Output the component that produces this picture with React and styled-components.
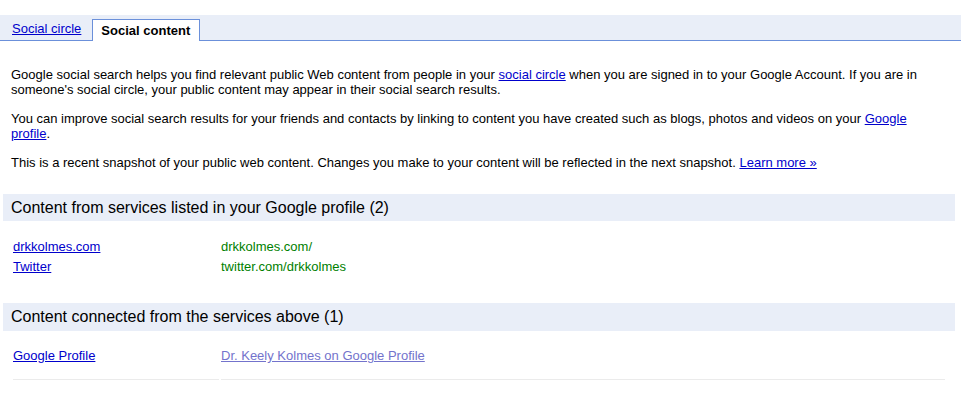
import React from "react";
import styled, { createGlobalStyle } from "styled-components";

const GlobalStyle = createGlobalStyle`
  body {
    margin: 0;
    background: #fff;
    font-family: "Liberation Sans", Arial, sans-serif;
    color: #000;
  }
`;

const Page = styled.div`
  padding-top: 15px;
  width: 965px;
`;

const TabBar = styled.div`
  display: flex;
  align-items: flex-end;
  width: 961px;
  height: 26px;
  padding-left: 4px;
  padding-right: 2px;
  box-sizing: border-box;
  background: #e9eef8;
  border-bottom: 1px solid #6b90da;
`;

const Tab = styled.div`
  font-size: 13px;
  line-height: 15px;
  padding: 0 8px;
  margin-right: 3px;
  box-sizing: border-box;
  ${(p) =>
    p.$active
      ? `
    height: 22px;
    padding-top: 3px;
    padding-right: 9px;
    background: #fff;
    font-weight: bold;
    border: 1px solid #6b90da;
    border-bottom: none;
    margin-bottom: -1px;
  `
      : `
    padding-bottom: 4px;
  `}
`;

const Link = styled.a`
  color: ${(p) => (p.$visited ? "#7373cc" : "#0000cc")};
  text-decoration: underline;
  cursor: pointer;
`;

const Intro = styled.div`
  padding: 26px 0 0 11px;
  width: 922px;
`;

const Para = styled.p`
  margin: 0 0 14px;
  font-size: 13px;
  line-height: 15px;
`;

const SectionHeader = styled.div`
  margin: ${(p) => p.$top}px 0 0 3px;
  width: 952px;
  height: ${(p) => p.$height}px;
  box-sizing: border-box;
  padding-left: 8px;
  display: flex;
  align-items: center;
  background: #e9eef8;
  font-size: 16px;
`;

const Table = styled.div`
  display: grid;
  grid-template-columns: 206px 724px;
  column-gap: 2px;
  margin: ${(p) => p.$top}px 0 0 13px;
`;

const Cell = styled.div`
  font-size: 13px;
  line-height: 15px;
  padding: ${(p) => (p.$bordered ? "17px 0 16px" : "3px 0 2px")};
  border-bottom: ${(p) => (p.$bordered ? "1px solid #ebebeb" : "none")};
  color: ${(p) => (p.$green ? "#008000" : "inherit")};
`;

export default function App() {
  return (
    <Page>
      <GlobalStyle />
      <TabBar>
        <Tab>
          <Link>Social circle</Link>
        </Tab>
        <Tab $active>Social content</Tab>
      </TabBar>

      <Intro>
        <Para>
          Google social search helps you find relevant public Web content from
          people in your <Link>social circle</Link> when you are signed in to
          your Google Account. If you are in someone's social circle, your
          public content may appear in their social search results.
        </Para>
        <Para>
          You can improve social search results for your friends and contacts
          by linking to content you have created such as blogs, photos and
          videos on your <Link>Google profile</Link>.
        </Para>
        <Para>
          This is a recent snapshot of your public web content. Changes you make
          to your content will be reflected in the next snapshot.{" "}
          <Link>Learn more »</Link>
        </Para>
      </Intro>

      <SectionHeader $top={24} $height={27}>
        Content from services listed in your Google profile (2)
      </SectionHeader>
      <Table $top={15}>
        <Cell>
          <Link>drkkolmes.com</Link>
        </Cell>
        <Cell $green>drkkolmes.com/</Cell>
        <Cell>
          <Link>Twitter</Link>
        </Cell>
        <Cell $green>twitter.com/drkkolmes</Cell>
      </Table>

      <SectionHeader $top={27} $height={28}>
        Content connected from the services above (1)
      </SectionHeader>
      <Table $top={0}>
        <Cell $bordered>
          <Link>Google Profile</Link>
        </Cell>
        <Cell $bordered>
          <Link $visited>Dr. Keely Kolmes on Google Profile</Link>
        </Cell>
      </Table>
    </Page>
  );
}
